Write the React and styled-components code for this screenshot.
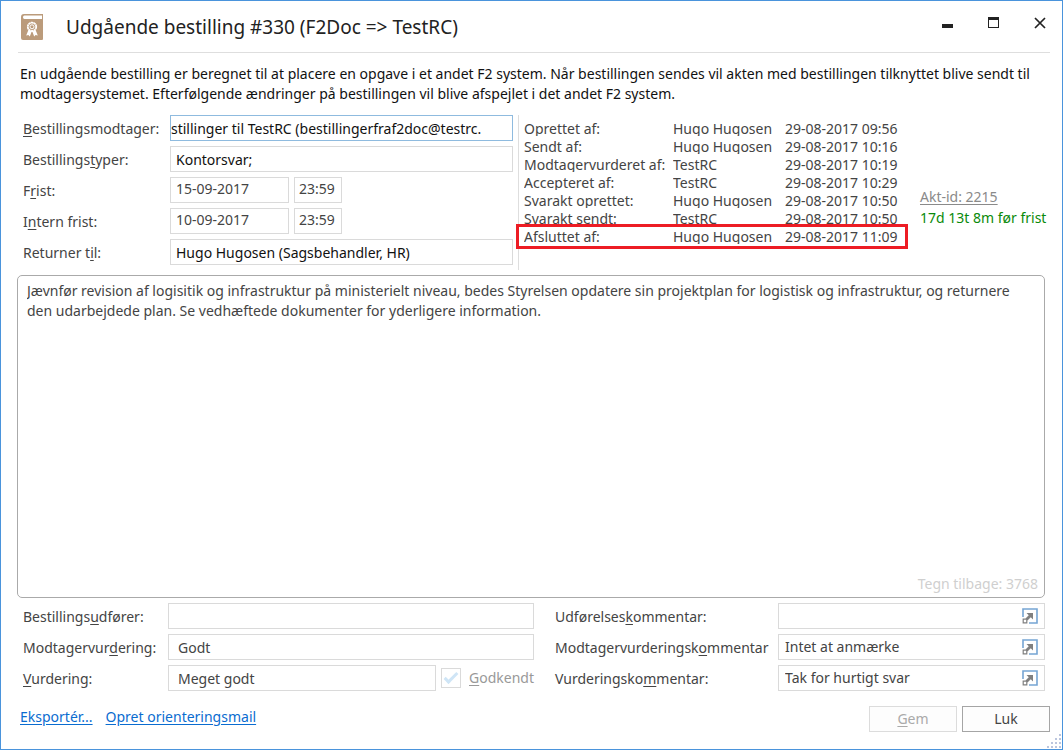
import React from 'react';
import styled, { createGlobalStyle, css } from 'styled-components';

const GlobalStyle = createGlobalStyle`
  *, *::before, *::after {
    box-sizing: border-box;
  }

  body {
    margin: 0;
    background-color: #fff;
  }

  body, button, input, textarea {
    font-family: 'Noto Sans', 'Open Sans', sans-serif;
    font-size: 14px;
    line-height: 20px;
    color: #444;
  }
`;

const Window = styled.div`
  position: relative;
  display: flex;
  flex-direction: column;
  min-height: 100vh;
  padding: 0 17px 17px 16px;
  border: 1px solid #4a94dc;
  background-color: #fff;
`;

const TitleBar = styled.header`
  display: flex;
  align-items: center;
  height: 52px;
  margin: 0 -5px 0 1px;
  padding: 0 3px 0 3px;
  border-bottom: 1px solid #dedede;
`;

const Title = styled.h1`
  flex: 1;
  margin: 0 0 0 23px;
  font-size: 19px;
  line-height: 24px;
  font-weight: 400;
  color: #222;
`;

const WindowButtons = styled.div`
  display: flex;
  gap: 32px;
  margin-bottom: 8px;
`;

const WindowButton = styled.button`
  display: flex;
  padding: 0;
  border: 0;
  background: none;
`;

const Intro = styled.p`
  margin: 11px 0;
  padding-left: 3px;
  color: #111;
`;

const Details = styled.div`
  display: grid;
  grid-template-columns: minmax(0, 1fr) 532px;
`;

const FieldRows = styled.div`
  display: flex;
  flex-direction: column;
  gap: 5px;
  min-width: 0;
  padding-left: ${({ $inset }) => ($inset ? '6px' : '0')};
`;

const FieldRow = styled.div`
  display: flex;
  align-items: center;
  gap: 5px;
  height: 26px;
`;

const FieldLabel = styled.label`
  flex: none;
  width: ${({ $width }) => $width};
  padding-top: 2px;
  white-space: nowrap;

  & u {
    text-underline-offset: 2px;
  }
`;

const TextField = styled.input`
  flex: ${({ $width }) => ($width ? `0 0 ${$width}` : '1')};
  min-width: 0;
  height: 26px;
  padding: 0 5px 0 ${({ $indent }) => $indent || '5px'};
  border: 1px solid ${({ $active }) => ($active ? '#8fbbdf' : '#dadada')};
  background-color: #fff;
  outline: none;
  ${({ $strong }) => $strong && 'color: #111;'}
  ${({ $raised }) =>
    $raised &&
    css`
      padding-bottom: 3px;
    `}
`;

const LogPanel = styled.section`
  display: flex;
  align-items: flex-start;
  gap: 18px;
  height: 155px;
  margin-left: 5px;
  padding: 5px 0 0 5px;
  border-left: 1px solid #dedede;
`;

const LogTable = styled.table`
  width: 378px;
  table-layout: fixed;
  border-collapse: collapse;
`;

const LogRow = styled.tr`
  position: relative;
  height: 18px;

  ${({ $marked }) =>
    $marked &&
    css`
      &::after {
        content: '';
        position: absolute;
        inset: -4px -6px -3px -8px;
        border: 3px solid #ed1c24;
      }
    `}
`;

const LogCell = styled.td`
  width: ${({ $width }) => $width};
  padding: 0;
  font-weight: 400;
  text-align: left;
  vertical-align: top;
  white-space: nowrap;
`;

const LogText = styled.span`
  display: block;
  height: 16px;
  line-height: 18px;
  overflow: hidden;
`;

const CaseInfo = styled.div`
  display: flex;
  flex-direction: column;
  gap: 1px;
  padding-top: 67px;
  white-space: nowrap;
`;

const CaseLink = styled.a`
  color: #8a8a8a;
  text-underline-offset: 2px;
`;

const Deadline = styled.span`
  color: #0a8a0a;
`;

const MessageBox = styled.div`
  display: flex;
  flex: 1;
  flex-direction: column;
  margin: 5px 0;
  padding: 5px 6px 3px 9px;
  border: 1px solid #aaa;
  border-radius: 5px;
`;

const Message = styled.textarea`
  flex: 1;
  width: 100%;
  padding: 0 10px 0 0;
  border: 0;
  background: none;
  outline: none;
  resize: none;
  overflow: hidden;
`;

const CharsLeft = styled.span`
  align-self: flex-end;
  color: #cfcfcf;
`;

const Assessment = styled.div`
  display: grid;
  grid-template-columns: minmax(0, 1fr) 490px;
  column-gap: 21px;
`;

const CommentBox = styled.div`
  display: flex;
  flex: 1;
  align-items: center;
  min-width: 0;
  height: 26px;
  padding-right: 6px;
  border: 1px solid #dadada;
`;

const CommentInput = styled.input`
  flex: 1;
  min-width: 0;
  height: 24px;
  padding: 0 6px 2px;
  border: 0;
  background: none;
  outline: none;
`;

const ExpandButton = styled.button`
  display: flex;
  padding: 0;
  border: 0;
  background: none;
`;

const CheckLabel = styled.label`
  display: flex;
  flex: none;
  align-items: center;
  gap: 8px;
  color: #999;

  & u {
    text-underline-offset: 2px;
  }
`;

const Checkbox = styled.input`
  appearance: none;
  width: 20px;
  height: 20px;
  margin: 0;
  border: 1px solid #dadada;
  display: grid;
  place-items: center;

  &:checked::after {
    content: '';
    width: 14px;
    height: 7px;
    margin-bottom: 4px;
    border-left: 3px solid #cfe5f6;
    border-bottom: 3px solid #cfe5f6;
    transform: rotate(-45deg);
  }
`;

const Footer = styled.footer`
  display: flex;
  align-items: center;
  gap: 13px;
  margin: 15px -5px 0 3px;
`;

const FooterLink = styled.a`
  margin-bottom: 4px;
  color: #0a6cd0;
  text-underline-offset: 2px;
`;

const FooterButtons = styled.div`
  display: flex;
  gap: 5px;
  margin-left: auto;
`;

const FooterButton = styled.button`
  width: 88px;
  height: 26px;
  padding: 0;
  border: 1px solid #a5a5a5;
  background-color: #fdfdfd;

  &:disabled {
    color: #aaa;
    border-color: #dcdcdc;
  }

  & u {
    text-underline-offset: 2px;
  }
`;

const Grip = styled.svg`
  position: absolute;
  right: 1px;
  bottom: 1px;
`;

const logEntries = [
  { label: 'Oprettet af:', name: 'Hugo Hugosen', time: '29-08-2017 09:56' },
  { label: 'Sendt af:', name: 'Hugo Hugosen', time: '29-08-2017 10:16' },
  { label: 'Modtagervurderet af:', name: 'TestRC', time: '29-08-2017 10:19' },
  { label: 'Accepteret af:', name: 'TestRC', time: '29-08-2017 10:29' },
  { label: 'Svarakt oprettet:', name: 'Hugo Hugosen', time: '29-08-2017 10:50' },
  { label: 'Svarakt sendt:', name: 'TestRC', time: '29-08-2017 10:50' },
  { label: 'Afsluttet af:', name: 'Hugo Hugosen', time: '29-08-2017 11:09', marked: true },
];

const message =
  'Jævnfør revision af logisitik og infrastruktur på ministerielt niveau, bedes Styrelsen opdatere sin projektplan for logistisk og infrastruktur, og returnere den udarbejdede plan. Se vedhæftede dokumenter for yderligere information.';

// "_" stands before the access key, which is underlined
function AccessText({ text }) {
  const [before, after] = text.split('_');
  return (
    <span>
      {before}
      <u>{after[0]}</u>
      {after.slice(1)}
    </span>
  );
}

function Row({ id, label, labelWidth, children }) {
  return (
    <FieldRow>
      <FieldLabel htmlFor={id} $width={labelWidth}>
        <AccessText text={label} />
      </FieldLabel>
      {children}
    </FieldRow>
  );
}

function BookSvg() {
  return (
    <svg width="22" height="26" viewBox="0 0 22 26" aria-hidden="true">
      <path
        fill="#bb9b7b"
        d="M3 0h19v1.5H3.4Q2 1.5 2 3.2T3.4 5H21V1h1v24q0 1-1 1H2q-2 0-2-2V3q0-3 3-3z"
      />
      <g fill="none" stroke="#fff">
        <circle cx="11" cy="12.8" r="4.2" strokeWidth="1.8" strokeDasharray="2.3 .3" />
        <circle cx="11" cy="12.8" r="2" strokeWidth="1" />
      </g>
      <path
        fill="#fff"
        d="M7.4 16 5.2 21.4l2.2-.4 1.4 1.6 1.9-5zM14.6 16l2.2 5.4-2.2-.4-1.4 1.6-1.9-5z"
      />
    </svg>
  );
}

function ExpandSvg() {
  return (
    <svg width="16" height="16" viewBox="0 0 16 16" fill="none" aria-hidden="true">
      <path d="M1 9V1h14v14H7" stroke="#76a5d4" strokeWidth="1.6" />
      <path d="M4.5 11.5 9 7" stroke="#808080" strokeWidth="2.8" />
      <path d="M4.5 5H11v6.5z" fill="#808080" />
      <path d="M1.2 11.2h3.6v3.6H1.2z" fill="#fff" stroke="#808080" strokeWidth="1.2" />
    </svg>
  );
}

function Comment({ id, label, value }) {
  return (
    <Row id={id} label={label} labelWidth="218px">
      <CommentBox>
        <CommentInput id={id} defaultValue={value} />
        <ExpandButton type="button" aria-label="Udvid">
          <ExpandSvg />
        </ExpandButton>
      </CommentBox>
    </Row>
  );
}

function Header() {
  return (
    <TitleBar>
      <BookSvg />
      <Title>Udgående bestilling #330 (F2Doc =&gt; TestRC)</Title>
      <WindowButtons>
        <WindowButton type="button" aria-label="Minimer">
          <svg width="14" height="14" viewBox="0 0 14 14">
            <path d="M1 8h11v4H1z" fill="#222" />
          </svg>
        </WindowButton>
        <WindowButton type="button" aria-label="Maksimer">
          <svg width="14" height="14" viewBox="0 0 14 14">
            <path fillRule="evenodd" d="M1 1h11v11H1zM2 4v7h9V4z" fill="#222" />
          </svg>
        </WindowButton>
        <WindowButton type="button" aria-label="Luk vindue">
          <svg width="14" height="14" viewBox="0 0 14 14">
            <path d="M2 2l10 10M12 2 2 12" stroke="#222" strokeWidth="1.7" />
          </svg>
        </WindowButton>
      </WindowButtons>
    </TitleBar>
  );
}

function Log() {
  return (
    <LogPanel>
      <LogTable>
        <tbody>
          {logEntries.map(({ label, name, time, marked }) => (
            <LogRow key={label} $marked={marked}>
              <LogCell as="th" scope="row" $width="149px">
                <LogText>{label}</LogText>
              </LogCell>
              <LogCell $width="112px">
                <LogText>{name}</LogText>
              </LogCell>
              <LogCell $width="117px">
                <LogText>{time}</LogText>
              </LogCell>
            </LogRow>
          ))}
        </tbody>
      </LogTable>
      <CaseInfo>
        <CaseLink href="#akt">Akt-id: 2215</CaseLink>
        <Deadline>17d 13t 8m før frist</Deadline>
      </CaseInfo>
    </LogPanel>
  );
}

const gripDots = [
  [12, 0], [8, 4], [12, 4], [4, 8], [8, 8], [12, 8], [0, 12], [4, 12], [8, 12], [12, 12],
];

export default function App() {
  return (
    <>
      <GlobalStyle />
      <Window>
        <Header />
        <Intro>
          En udgående bestilling er beregnet til at placere en opgave i et andet F2 system. Når
          bestillingen sendes vil akten med bestillingen tilknyttet blive sendt til modtagersystemet.
          Efterfølgende ændringer på bestillingen vil blive afspejlet i det andet F2 system.
        </Intro>

        <Details>
          <FieldRows $inset>
            <Row id="receiver" label="_Bestillingsmodtager:" labelWidth="142px">
              <TextField
                id="receiver"
                $active
                $strong
                $indent="0px"
                defaultValue="stillinger til TestRC (bestillingerfraf2doc@testrc."
              />
            </Row>
            <Row id="types" label="Bestillings_typer:" labelWidth="142px">
              <TextField id="types" $strong defaultValue="Kontorsvar;" />
            </Row>
            <Row id="deadline" label="F_rist:" labelWidth="142px">
              <TextField id="deadline" $width="119px" $raised defaultValue="15-09-2017" />
              <TextField aria-label="Frist, tid" $width="48px" $raised $indent="4px" defaultValue="23:59" />
            </Row>
            <Row id="internal" label="I_ntern frist:" labelWidth="142px">
              <TextField id="internal" $width="119px" $raised defaultValue="10-09-2017" />
              <TextField aria-label="Intern frist, tid" $width="48px" $raised $indent="4px" defaultValue="23:59" />
            </Row>
            <Row id="return" label="Returner t_il:" labelWidth="142px">
              <TextField id="return" $strong defaultValue="Hugo Hugosen (Sagsbehandler, HR)" />
            </Row>
          </FieldRows>
          <Log />
        </Details>

        <MessageBox>
          <Message aria-label="Besked" defaultValue={message} />
          <CharsLeft>Tegn tilbage: 3768</CharsLeft>
        </MessageBox>

        <Assessment>
          <FieldRows $inset>
            <Row id="executor" label="Bestillings_udfører:" labelWidth="140px">
              <TextField id="executor" />
            </Row>
            <Row id="receiverRating" label="Modtagervur_dering:" labelWidth="140px">
              <TextField id="receiverRating" $indent="9px" defaultValue="Godt" />
            </Row>
            <Row id="rating" label="_Vurdering:" labelWidth="140px">
              <TextField id="rating" $indent="9px" defaultValue="Meget godt" />
              <CheckLabel>
                <Checkbox type="checkbox" defaultChecked disabled />
                <AccessText text="_Godkendt" />
              </CheckLabel>
            </Row>
          </FieldRows>
          <FieldRows>
            <Comment id="executionComment" label="Udførelses_kommentar:" value="" />
            <Comment
              id="receiverComment"
              label="Modtagervurderingsk_ommentar"
              value="Intet at anmærke"
            />
            <Comment id="ratingComment" label="Vurderingsko_mmentar:" value="Tak for hurtigt svar" />
          </FieldRows>
        </Assessment>

        <Footer>
          <FooterLink href="#eksporter">Eksportér...</FooterLink>
          <FooterLink href="#orienteringsmail">Opret orienteringsmail</FooterLink>
          <FooterButtons>
            <FooterButton type="button" disabled>
              <AccessText text="_Gem" />
            </FooterButton>
            <FooterButton type="button">Luk</FooterButton>
          </FooterButtons>
        </Footer>

        <Grip width="14" height="14" viewBox="0 0 14 14" aria-hidden="true">
          {gripDots.map(([x, y]) => (
            <rect key={`${x}-${y}`} x={x} y={y} width="2" height="2" fill="#bcc6de" />
          ))}
        </Grip>
      </Window>
    </>
  );
}
